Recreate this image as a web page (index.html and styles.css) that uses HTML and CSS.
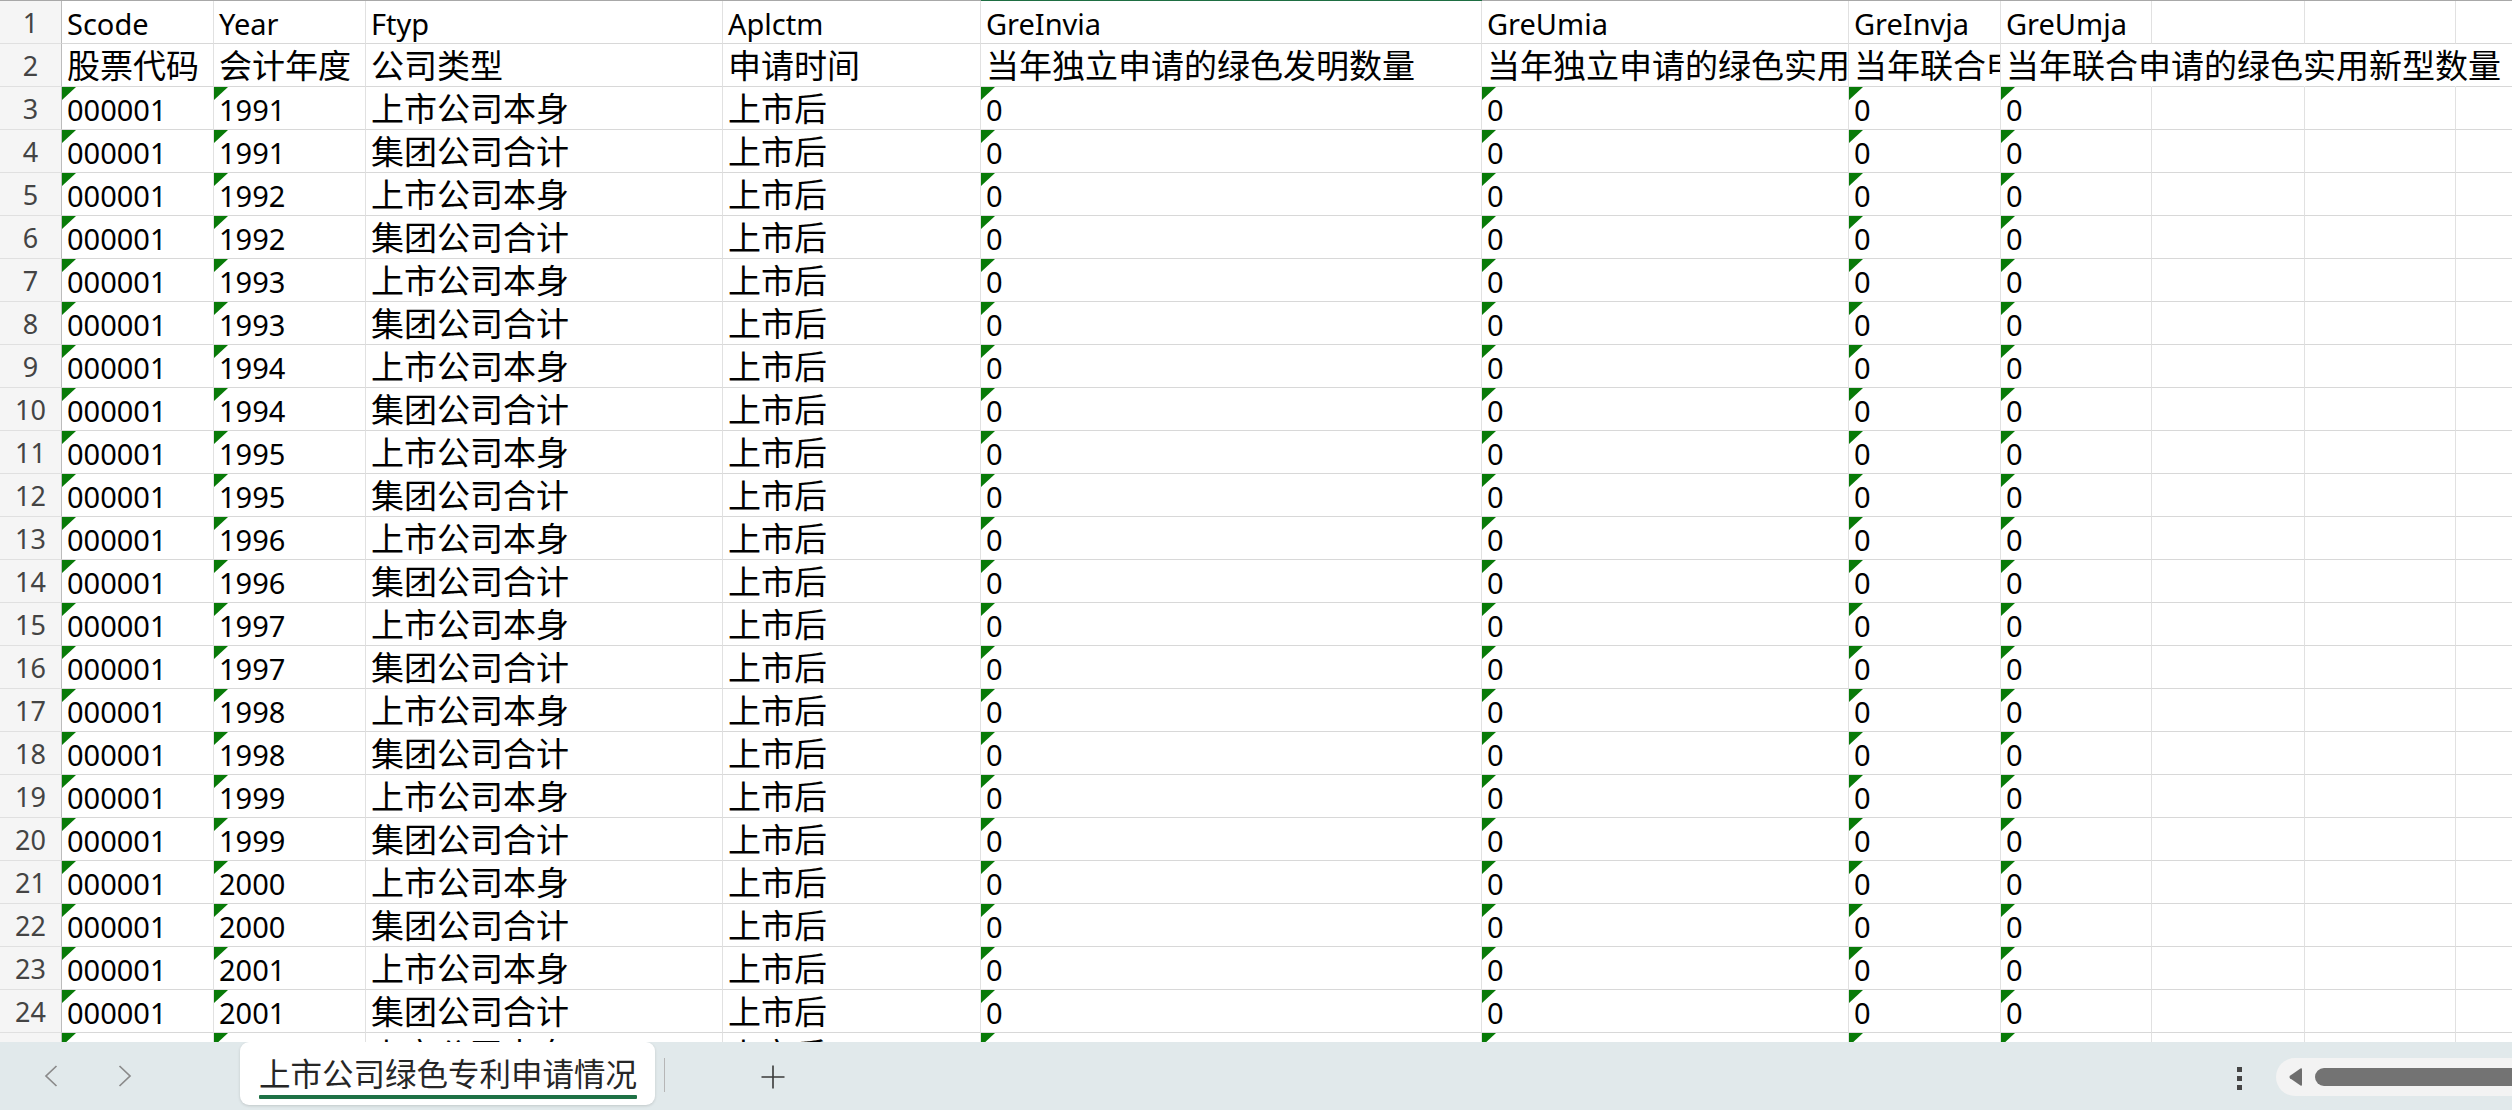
FILE: index.html
```html
<!DOCTYPE html>
<html lang="zh-CN">
<head>
<meta charset="utf-8">
<title>上市公司绿色专利申请情况</title>
<link rel="stylesheet" href="styles.css">
</head>
<body>
<div class="app">
  <div class="sheet">
    <div class="grid">
      <div class="hl"></div><div class="hl"></div><div class="hl"></div><div class="hl"></div><div class="hl"></div><div class="hl sel"></div><div class="hl"></div><div class="hl"></div><div class="hl"></div><div class="hl"></div><div class="hl"></div><div class="hl"></div>

      <div class="rh">1</div><div class="c"><span class="l">Scode</span></div><div class="c"><span class="l">Year</span></div><div class="c"><span class="l">Ftyp</span></div><div class="c"><span class="l">Aplctm</span></div><div class="c"><span class="l">GreInvia</span></div><div class="c"><span class="l">GreUmia</span></div><div class="c"><span class="l">GreInvja</span></div><div class="c"><span class="l">GreUmja</span></div><div class="c"></div><div class="c"></div><div class="c"></div>

      <div class="rh">2</div><div class="c">股票代码</div><div class="c">会计年度</div><div class="c">公司类型</div><div class="c">申请时间</div><div class="c">当年独立申请的绿色发明数量</div><div class="c">当年独立申请的绿色实用新型数量</div><div class="c">当年联合申请的绿色发明数量</div><div class="c spill nob">当年联合申请的绿色实用新型数量</div><div class="c nob"></div><div class="c nob"></div><div class="c"></div>

      <div class="rh">3</div><div class="c t"><span class="l">000001</span></div><div class="c t"><span class="l">1991</span></div><div class="c">上市公司本身</div><div class="c">上市后</div><div class="c t"><span class="l">0</span></div><div class="c t"><span class="l">0</span></div><div class="c t"><span class="l">0</span></div><div class="c t"><span class="l">0</span></div><div class="c"></div><div class="c"></div><div class="c"></div>
      <div class="rh">4</div><div class="c t"><span class="l">000001</span></div><div class="c t"><span class="l">1991</span></div><div class="c">集团公司合计</div><div class="c">上市后</div><div class="c t"><span class="l">0</span></div><div class="c t"><span class="l">0</span></div><div class="c t"><span class="l">0</span></div><div class="c t"><span class="l">0</span></div><div class="c"></div><div class="c"></div><div class="c"></div>
      <div class="rh">5</div><div class="c t"><span class="l">000001</span></div><div class="c t"><span class="l">1992</span></div><div class="c">上市公司本身</div><div class="c">上市后</div><div class="c t"><span class="l">0</span></div><div class="c t"><span class="l">0</span></div><div class="c t"><span class="l">0</span></div><div class="c t"><span class="l">0</span></div><div class="c"></div><div class="c"></div><div class="c"></div>
      <div class="rh">6</div><div class="c t"><span class="l">000001</span></div><div class="c t"><span class="l">1992</span></div><div class="c">集团公司合计</div><div class="c">上市后</div><div class="c t"><span class="l">0</span></div><div class="c t"><span class="l">0</span></div><div class="c t"><span class="l">0</span></div><div class="c t"><span class="l">0</span></div><div class="c"></div><div class="c"></div><div class="c"></div>
      <div class="rh">7</div><div class="c t"><span class="l">000001</span></div><div class="c t"><span class="l">1993</span></div><div class="c">上市公司本身</div><div class="c">上市后</div><div class="c t"><span class="l">0</span></div><div class="c t"><span class="l">0</span></div><div class="c t"><span class="l">0</span></div><div class="c t"><span class="l">0</span></div><div class="c"></div><div class="c"></div><div class="c"></div>
      <div class="rh">8</div><div class="c t"><span class="l">000001</span></div><div class="c t"><span class="l">1993</span></div><div class="c">集团公司合计</div><div class="c">上市后</div><div class="c t"><span class="l">0</span></div><div class="c t"><span class="l">0</span></div><div class="c t"><span class="l">0</span></div><div class="c t"><span class="l">0</span></div><div class="c"></div><div class="c"></div><div class="c"></div>
      <div class="rh">9</div><div class="c t"><span class="l">000001</span></div><div class="c t"><span class="l">1994</span></div><div class="c">上市公司本身</div><div class="c">上市后</div><div class="c t"><span class="l">0</span></div><div class="c t"><span class="l">0</span></div><div class="c t"><span class="l">0</span></div><div class="c t"><span class="l">0</span></div><div class="c"></div><div class="c"></div><div class="c"></div>
      <div class="rh">10</div><div class="c t"><span class="l">000001</span></div><div class="c t"><span class="l">1994</span></div><div class="c">集团公司合计</div><div class="c">上市后</div><div class="c t"><span class="l">0</span></div><div class="c t"><span class="l">0</span></div><div class="c t"><span class="l">0</span></div><div class="c t"><span class="l">0</span></div><div class="c"></div><div class="c"></div><div class="c"></div>
      <div class="rh">11</div><div class="c t"><span class="l">000001</span></div><div class="c t"><span class="l">1995</span></div><div class="c">上市公司本身</div><div class="c">上市后</div><div class="c t"><span class="l">0</span></div><div class="c t"><span class="l">0</span></div><div class="c t"><span class="l">0</span></div><div class="c t"><span class="l">0</span></div><div class="c"></div><div class="c"></div><div class="c"></div>
      <div class="rh">12</div><div class="c t"><span class="l">000001</span></div><div class="c t"><span class="l">1995</span></div><div class="c">集团公司合计</div><div class="c">上市后</div><div class="c t"><span class="l">0</span></div><div class="c t"><span class="l">0</span></div><div class="c t"><span class="l">0</span></div><div class="c t"><span class="l">0</span></div><div class="c"></div><div class="c"></div><div class="c"></div>
      <div class="rh">13</div><div class="c t"><span class="l">000001</span></div><div class="c t"><span class="l">1996</span></div><div class="c">上市公司本身</div><div class="c">上市后</div><div class="c t"><span class="l">0</span></div><div class="c t"><span class="l">0</span></div><div class="c t"><span class="l">0</span></div><div class="c t"><span class="l">0</span></div><div class="c"></div><div class="c"></div><div class="c"></div>
      <div class="rh">14</div><div class="c t"><span class="l">000001</span></div><div class="c t"><span class="l">1996</span></div><div class="c">集团公司合计</div><div class="c">上市后</div><div class="c t"><span class="l">0</span></div><div class="c t"><span class="l">0</span></div><div class="c t"><span class="l">0</span></div><div class="c t"><span class="l">0</span></div><div class="c"></div><div class="c"></div><div class="c"></div>
      <div class="rh">15</div><div class="c t"><span class="l">000001</span></div><div class="c t"><span class="l">1997</span></div><div class="c">上市公司本身</div><div class="c">上市后</div><div class="c t"><span class="l">0</span></div><div class="c t"><span class="l">0</span></div><div class="c t"><span class="l">0</span></div><div class="c t"><span class="l">0</span></div><div class="c"></div><div class="c"></div><div class="c"></div>
      <div class="rh">16</div><div class="c t"><span class="l">000001</span></div><div class="c t"><span class="l">1997</span></div><div class="c">集团公司合计</div><div class="c">上市后</div><div class="c t"><span class="l">0</span></div><div class="c t"><span class="l">0</span></div><div class="c t"><span class="l">0</span></div><div class="c t"><span class="l">0</span></div><div class="c"></div><div class="c"></div><div class="c"></div>
      <div class="rh">17</div><div class="c t"><span class="l">000001</span></div><div class="c t"><span class="l">1998</span></div><div class="c">上市公司本身</div><div class="c">上市后</div><div class="c t"><span class="l">0</span></div><div class="c t"><span class="l">0</span></div><div class="c t"><span class="l">0</span></div><div class="c t"><span class="l">0</span></div><div class="c"></div><div class="c"></div><div class="c"></div>
      <div class="rh">18</div><div class="c t"><span class="l">000001</span></div><div class="c t"><span class="l">1998</span></div><div class="c">集团公司合计</div><div class="c">上市后</div><div class="c t"><span class="l">0</span></div><div class="c t"><span class="l">0</span></div><div class="c t"><span class="l">0</span></div><div class="c t"><span class="l">0</span></div><div class="c"></div><div class="c"></div><div class="c"></div>
      <div class="rh">19</div><div class="c t"><span class="l">000001</span></div><div class="c t"><span class="l">1999</span></div><div class="c">上市公司本身</div><div class="c">上市后</div><div class="c t"><span class="l">0</span></div><div class="c t"><span class="l">0</span></div><div class="c t"><span class="l">0</span></div><div class="c t"><span class="l">0</span></div><div class="c"></div><div class="c"></div><div class="c"></div>
      <div class="rh">20</div><div class="c t"><span class="l">000001</span></div><div class="c t"><span class="l">1999</span></div><div class="c">集团公司合计</div><div class="c">上市后</div><div class="c t"><span class="l">0</span></div><div class="c t"><span class="l">0</span></div><div class="c t"><span class="l">0</span></div><div class="c t"><span class="l">0</span></div><div class="c"></div><div class="c"></div><div class="c"></div>
      <div class="rh">21</div><div class="c t"><span class="l">000001</span></div><div class="c t"><span class="l">2000</span></div><div class="c">上市公司本身</div><div class="c">上市后</div><div class="c t"><span class="l">0</span></div><div class="c t"><span class="l">0</span></div><div class="c t"><span class="l">0</span></div><div class="c t"><span class="l">0</span></div><div class="c"></div><div class="c"></div><div class="c"></div>
      <div class="rh">22</div><div class="c t"><span class="l">000001</span></div><div class="c t"><span class="l">2000</span></div><div class="c">集团公司合计</div><div class="c">上市后</div><div class="c t"><span class="l">0</span></div><div class="c t"><span class="l">0</span></div><div class="c t"><span class="l">0</span></div><div class="c t"><span class="l">0</span></div><div class="c"></div><div class="c"></div><div class="c"></div>
      <div class="rh">23</div><div class="c t"><span class="l">000001</span></div><div class="c t"><span class="l">2001</span></div><div class="c">上市公司本身</div><div class="c">上市后</div><div class="c t"><span class="l">0</span></div><div class="c t"><span class="l">0</span></div><div class="c t"><span class="l">0</span></div><div class="c t"><span class="l">0</span></div><div class="c"></div><div class="c"></div><div class="c"></div>
      <div class="rh">24</div><div class="c t"><span class="l">000001</span></div><div class="c t"><span class="l">2001</span></div><div class="c">集团公司合计</div><div class="c">上市后</div><div class="c t"><span class="l">0</span></div><div class="c t"><span class="l">0</span></div><div class="c t"><span class="l">0</span></div><div class="c t"><span class="l">0</span></div><div class="c"></div><div class="c"></div><div class="c"></div>
      <div class="rh">25</div><div class="c t"><span class="l">000001</span></div><div class="c t"><span class="l">2002</span></div><div class="c">上市公司本身</div><div class="c">上市后</div><div class="c t"><span class="l">0</span></div><div class="c t"><span class="l">0</span></div><div class="c t"><span class="l">0</span></div><div class="c t"><span class="l">0</span></div><div class="c"></div><div class="c"></div><div class="c"></div>
    </div>
  </div>

  <div class="tabbar">
    <div class="nav">
      <svg class="chev prev" width="14" height="22" viewBox="0 0 14 22"><polyline points="12.5,1 2,11 12.5,21" fill="none" stroke="#8a8a8a" stroke-width="1.7"/></svg>
      <svg class="chev next" width="14" height="22" viewBox="0 0 14 22"><polyline points="1.5,1 12,11 1.5,21" fill="none" stroke="#8a8a8a" stroke-width="1.7"/></svg>
    </div>
    <div class="tab">
      <span class="tab-label">上市公司绿色专利申请情况</span>
      <span class="tab-line"></span>
    </div>
    <div class="sep"></div>
    <svg class="plus" width="26" height="24" viewBox="0 0 26 24"><path d="M13 0.5V23.5M1.5 12H24.5" fill="none" stroke="#3a3a3a" stroke-width="1.6"/></svg>
    <div class="dots"><span></span><span></span><span></span></div>
    <div class="hscroll">
      <svg class="sarrow" width="15" height="20" viewBox="0 0 15 20"><path d="M12.5 1.5 Q14 0.8 14 2.5 V17.5 Q14 19.2 12.5 18.5 L2 11.3 Q0.8 10 2 8.7 Z" fill="#6e6e6e"/></svg>
      <div class="thumb"></div>
    </div>
  </div>
</div>
</body>
</html>
```

FILE: styles.css
```css
html, body {
  margin: 0;
  padding: 0;
  background: #ffffff;
}

body {
  width: 2512px;
  height: 1110px;
  overflow: hidden;
  font-family: "Noto Sans CJK SC", "Noto Sans", sans-serif;
}

.app {
  display: flex;
  flex-direction: column;
  width: 2512px;
  height: 1110px;
}

.sheet {
  height: 1042px;
  overflow: hidden;
  flex-shrink: 0;
  background: #ffffff;
}

.grid {
  display: grid;
  grid-template-columns: 62px 152px 152px 357px 258px 501px 367px 152px 151px 153px 151px 152px;
  grid-template-rows: 1px;
  grid-auto-rows: 43px;
  width: 2608px;
}

.hl {
  background: #a8a8a8;
  height: 1px;
}

.hl.sel {
  background: #1e6e42;
}

.rh {
  box-sizing: border-box;
  background: #f5f5f5;
  border-right: 1px solid #bcbcbc;
  border-bottom: 1px solid #e0e0e0;
  color: #444444;
  font-family: "Noto Sans", "Open Sans", sans-serif;
  font-size: 27px;
  line-height: 36px;
  padding-top: 4px;
  text-align: center;
  overflow: hidden;
}

.c {
  position: relative;
  box-sizing: border-box;
  border-right: 1px solid #e1e1e1;
  border-bottom: 1px solid #d8d8d8;
  padding-left: 5px;
  padding-top: 2px;
  font-size: 33px;
  line-height: 36px;
  color: #000000;
  white-space: nowrap;
  overflow: hidden;
}

.c .l {
  font-family: "Noto Sans", "Open Sans", sans-serif;
  font-size: 29px;
  line-height: 0;
}

.c.spill {
  overflow: visible;
  z-index: 1;
}

.c.nob {
  border-right-color: transparent;
}

.c.t::before {
  content: "";
  position: absolute;
  left: 0;
  top: 0;
  width: 14px;
  height: 13px;
  background: #087a08;
  clip-path: polygon(0 0, 100% 0, 0 100%);
}

/* bottom tab bar */
.tabbar {
  flex: 1;
  display: flex;
  align-items: flex-start;
  background: #e1e9eb;
  overflow: hidden;
}

.nav {
  width: 240px;
  flex-shrink: 0;
  display: flex;
  align-items: flex-start;
}

.chev {
  display: block;
  margin-top: 23px;
}

.chev.prev {
  margin-left: 44px;
}

.chev.next {
  margin-left: 60px;
}

.tab {
  flex-shrink: 0;
  width: 415px;
  height: 63px;
  box-sizing: border-box;
  padding-left: 19px;
  background: #ffffff;
  border-radius: 9px;
  box-shadow: 0 1px 3px rgba(0, 0, 0, 0.14);
  display: flex;
  flex-direction: column;
  align-items: flex-start;
}

.tab-label {
  display: block;
  margin-top: 8px;
  font-size: 31.5px;
  line-height: 44px;
  color: #262626;
  white-space: nowrap;
}

.tab-line {
  display: block;
  margin-top: 1px;
  width: 378px;
  height: 4px;
  background: #1e7145;
  border-radius: 1px;
}

.sep {
  flex-shrink: 0;
  width: 1px;
  height: 34px;
  margin-top: 16px;
  margin-left: 9px;
  background: #b6b6b6;
}

.plus {
  display: block;
  flex-shrink: 0;
  margin-top: 23px;
  margin-left: 95px;
}

.dots {
  margin-left: auto;
  margin-top: 25px;
  width: 6px;
  display: flex;
  flex-direction: column;
  gap: 4px;
}

.dots span {
  display: block;
  width: 5px;
  height: 5px;
  background: #454545;
}

.hscroll {
  flex-shrink: 0;
  width: 236px;
  height: 38px;
  margin-top: 16px;
  margin-left: 33px;
  background: #f3f3f3;
  border-radius: 19px 0 0 19px;
  display: flex;
  align-items: center;
}

.sarrow {
  display: block;
  margin-left: 12px;
}

.thumb {
  flex: 1;
  height: 18px;
  margin-left: 12px;
  background: #737373;
  border-radius: 9px 0 0 9px;
}
```
